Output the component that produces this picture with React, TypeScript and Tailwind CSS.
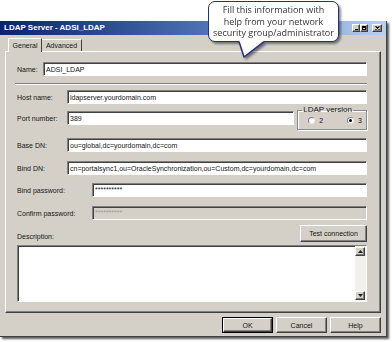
import React from "react";

const sunken =
  "bg-white border border-t-[#808080] border-l-[#808080] border-b-white border-r-white shadow-[inset_1px_1px_0_#404040]";
const raised =
  "bg-[#d4d0c8] border border-t-white border-l-white border-b-[#404040] border-r-[#404040] shadow-[inset_-1px_-1px_0_#808080]";

function Field({
  label,
  labelW,
  value,
  disabled,
  password,
}: {
  label: string;
  labelW: string;
  value: string;
  disabled?: boolean;
  password?: boolean;
}) {
  return (
    <div className="flex items-center h-[14px]">
      <div className={`${labelW} shrink-0`}>{label}</div>
      <div
        className={`flex-1 h-[14px] flex ${password ? "items-start pt-[2px]" : "items-center"} pl-[2px] overflow-hidden whitespace-nowrap ${
          disabled
            ? "bg-[#d4d0c8] border border-t-[#808080] border-l-[#808080] border-b-white border-r-white shadow-[inset_1px_1px_0_#404040] text-[#9a9a9a]"
            : sunken
        }`}
      >
        {value}
      </div>
    </div>
  );
}

function Radio({ checked, label }: { checked?: boolean; label: string }) {
  return (
    <div className="flex items-center gap-[4px]">
      <div className="w-[7px] h-[7px] rounded-full bg-white border border-t-[#808080] border-l-[#808080] border-b-[#e8e8e8] border-r-[#e8e8e8] flex items-center justify-center">
        {checked && <div className="w-[3px] h-[3px] rounded-full bg-black" />}
      </div>
      <span>{label}</span>
    </div>
  );
}

function Arrow({ up }: { up?: boolean }) {
  return (
    <svg width="5" height="3" viewBox="0 0 5 3">
      {up ? <polygon points="0,3 5,3 2.5,0" fill="#222" /> : <polygon points="0,0 5,0 2.5,3" fill="#222" />}
    </svg>
  );
}

export default function App() {
  return (
    <div className="relative w-[392px] h-[342px] bg-white overflow-hidden font-['Liberation_Sans',Arial,sans-serif] text-[7px] leading-none text-[#151515]">
      <div className="pt-[21px]">
        <div className="w-[387px] h-[316px] bg-[#d4d0c8] flex flex-col border-r border-b border-[#404040] shadow-[2px_2px_2px_rgba(0,0,0,0.65)]">
          {/* Title bar */}
          <div className="h-[14px] shrink-0 bg-linear-to-r from-[#0a246a] via-[#4a6cb0] to-[#b8d2f0] flex items-center pl-[4px] pr-[4px]">
            <span className="text-white font-bold text-[8px] leading-none">LDAP Server - ADSI_LDAP</span>
            <div className="ml-auto flex items-center">
              <div className={`w-[8px] h-[8px] ${raised} flex items-end justify-center pb-[1px]`}>
                <div className="w-[3px] h-[1px] bg-black" />
              </div>
              <div className={`w-[8px] h-[8px] ${raised} flex items-center justify-center`}>
                <div className="w-[4px] h-[4px] border border-black border-t-2" />
              </div>
              <div className={`ml-[4px] w-[10px] h-[8px] ${raised} flex items-center justify-center`}>
                <svg width="5" height="4" viewBox="0 0 5 4">
                  <path d="M0.5,0.3 L4.5,3.7 M4.5,0.3 L0.5,3.7" stroke="#000" strokeWidth="1.1" />
                </svg>
              </div>
            </div>
          </div>

          {/* Tabs */}
          <div className="h-[16px] shrink-0 flex items-end pl-[8px] relative z-10">
            <div className="h-[14px] -mb-px w-[34px] bg-[#d4d0c8] border-t border-l border-t-white border-l-white border-r border-r-[#404040] flex items-center justify-center pb-[1px]">
              General
            </div>
            <div className="h-[12px] w-[40px] border-t border-t-white border-r border-r-[#404040] flex items-center justify-center">
              Advanced
            </div>
          </div>

          {/* Panel */}
          <div className="mx-[5px] h-[262px] shrink-0 border border-t-white border-l-white border-r-[#404040] border-b-[#404040] shadow-[inset_-1px_-1px_0_#808080] pl-[11px] pr-[13px] flex flex-col">
            <div className="mt-[10px]">
              <Field label="Name:" labelW="w-[26px]" value="ADSI_LDAP" />
            </div>
            <div className="mt-[7px] -ml-[2px] h-[2px] border-t border-t-[#808080] border-b border-b-white" />
            <div className="mt-[5px]">
              <Field label="Host name:" labelW="w-[50px]" value="ldapserver.yourdomain.com" />
            </div>
            <div className="mt-[2px] h-[24px] flex items-center">
              <div className="w-[50px] shrink-0">Port number:</div>
              <div className={`w-[228px] h-[14px] ${sunken} flex items-center pl-[2px]`}>389</div>
              <fieldset className="ml-[3px] w-[70px] h-[24px] border border-[#8a8a8a] shadow-[inset_1px_1px_0_white,1px_1px_0_white] pl-[10px] pr-[4px]">
                <legend className="ml-[-6px] px-[1px] text-[8px] leading-none">LDAP version</legend>
                <div className="flex items-center justify-between mt-[3px]">
                  <Radio label="2" />
                  <Radio label="3" checked />
                </div>
              </fieldset>
            </div>
            <div className="mt-[8px]">
              <Field label="Base DN:" labelW="w-[50px]" value="ou=global,dc=yourdomain,dc=com" />
            </div>
            <div className="mt-[9px]">
              <Field
                label="Bind DN:"
                labelW="w-[50px]"
                value="cn=portalsync1,ou=OracleSynchronization,ou=Custom,dc=yourdomain,dc=com"
              />
            </div>
            <div className="mt-[8px]">
              <Field label="Bind password:" labelW="w-[75px]" value="**********" password />
            </div>
            <div className="mt-[9px]">
              <Field label="Confirm password:" labelW="w-[75px]" value="**********" password disabled />
            </div>
            <div className="mt-[5px] h-[17px] flex items-end justify-between">
              <div className="pb-[2px]">Description:</div>
              <div className={`w-[67px] h-[17px] ${raised} flex items-center justify-center`}>Test connection</div>
            </div>
            <div className={`mt-[3px] h-[57px] ${sunken} flex justify-end`}>
              <div className="w-[11px] flex flex-col bg-[#f2f1ed] py-[1px] pr-[1px]">
                <div className={`h-[9px] ${raised} flex items-center justify-center`}>
                  <Arrow up />
                </div>
                <div className="flex-1" />
                <div className={`h-[9px] ${raised} flex items-center justify-center`}>
                  <Arrow />
                </div>
              </div>
            </div>
          </div>

          {/* Buttons */}
          <div className="mt-[4px] flex justify-end gap-[3px] pr-[5px]">
            <div className="w-[51px] h-[16px] border border-black">
              <div className={`w-full h-full ${raised} flex items-center justify-center`}>OK</div>
            </div>
            <div className={`w-[51px] h-[16px] ${raised} flex items-center justify-center`}>Cancel</div>
            <div className={`w-[51px] h-[16px] ${raised} flex items-center justify-center`}>Help</div>
          </div>
        </div>
      </div>

      {/* Callout */}
      <div className="absolute left-[208px] top-[1px] drop-shadow-[2px_2px_1px_rgba(0,0,0,0.45)]">
        <div className="w-[131px] h-[41px] bg-white border-[1.5px] border-[#223080] rounded-[7px] flex flex-col items-center justify-center font-['Open_Sans',sans-serif] text-[9px] leading-[11.5px] text-[#333]">
          <span>Fill this information with</span>
          <span>help from your network</span>
          <span>security group/administrator</span>
        </div>
        <svg className="absolute left-[28px] top-[38px]" width="32" height="20" viewBox="0 0 32 20">
          <polygon points="3,0 28,0 28,2.5 8,18 3,2.5" fill="#fff" />
          <path d="M3,2.6 L8,18 L28,2.6" fill="none" stroke="#223080" strokeWidth="1.5" strokeLinejoin="round" />
        </svg>
      </div>
    </div>
  );
}
